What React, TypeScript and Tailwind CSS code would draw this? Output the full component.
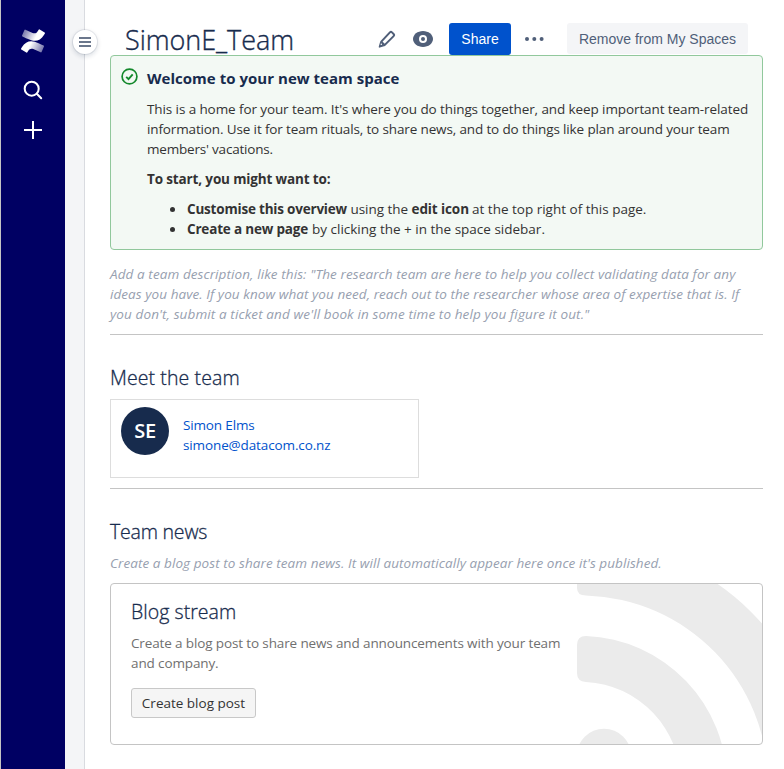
import type { ReactNode } from "react";

function Line({ className = "", children }: { className?: string; children: ReactNode }) {
  return <span className={"block whitespace-nowrap " + className}>{children}</span>;
}

function ConfluenceLogo() {
  return (
    <svg width="24" height="24" viewBox="0 0 24 24" fill="none">
      <defs>
        <linearGradient id="lower" x1="23" y1="22" x2="7" y2="14" gradientUnits="userSpaceOnUse">
          <stop offset="0" stopColor="#fff" stopOpacity="0.4" />
          <stop offset="0.85" stopColor="#fff" />
        </linearGradient>
        <linearGradient id="upper" x1="1" y1="2" x2="17" y2="10" gradientUnits="userSpaceOnUse">
          <stop offset="0" stopColor="#fff" stopOpacity="0.4" />
          <stop offset="0.85" stopColor="#fff" />
        </linearGradient>
      </defs>
      <path
        fill="url(#lower)"
        d="M.87 18.257c-.248.382-.53.875-.763 1.245a.764.764 0 0 0 .255 1.04l4.965 3.054a.764.764 0 0 0 1.058-.26c.199-.332.454-.763.733-1.221 1.967-3.247 3.945-2.853 7.508-1.146l4.957 2.337a.764.764 0 0 0 1.028-.382l2.364-5.346a.764.764 0 0 0-.382-1 599.851 599.851 0 0 1-4.965-2.361C10.911 10.97 5.224 11.185.87 18.257z"
      />
      <path
        fill="url(#upper)"
        d="M23.131 5.743c.249-.405.531-.875.764-1.25a.764.764 0 0 0-.256-1.034L18.675.404a.764.764 0 0 0-1.058.26c-.195.335-.451.763-.734 1.225-1.966 3.246-3.945 2.85-7.508 1.146L4.437.694a.764.764 0 0 0-1.027.382L1.046 6.422a.764.764 0 0 0 .382 1c1.039.49 3.105 1.467 4.965 2.361 6.698 3.246 12.392 3.029 16.738-4.04z"
      />
    </svg>
  );
}

function Sidebar() {
  return (
    <nav className="flex w-[65px] shrink-0 flex-col items-center border-l border-[#c4c4c4] bg-[#000063] pt-[29px]">
      <ConfluenceLogo />
      <svg className="mt-[27px]" width="20" height="20" viewBox="0 0 20 20" fill="none" stroke="#fff" strokeWidth="2">
        <circle cx="8.7" cy="8.7" r="7" />
        <path d="M13.8 13.8l4.4 4.4" strokeLinecap="round" />
      </svg>
      <svg className="mt-[21px]" width="18" height="18" viewBox="0 0 18 18" fill="#fff">
        <rect x="8" y="0" width="2" height="18" />
        <rect x="0" y="8" width="18" height="2" />
      </svg>
    </nav>
  );
}

function Header() {
  return (
    <header className="flex h-[55px] items-start pl-[15px] pt-[23px]">
      <h1 className="-mt-px w-[252px] whitespace-nowrap text-[27px] font-light leading-9 tracking-[-0.05px] text-[#172b4d] [-webkit-text-stroke:0.35px_#172b4d]">
        SimonE_Team
      </h1>
      <svg className="mt-[7px] shrink-0" width="20" height="19" viewBox="0 0 20 19" fill="none">
        <path d="M4.300 11.6L12.9 2.4a1.5 1.5 0 0 1 2.1 0l1.6 1.6a1.5 1.5 0 0 1 0 2.1L7.6 15.1z" stroke="#505f79" strokeWidth="2" strokeLinejoin="round" />
        <path d="M3.2 11.6l4.6 4.4-4.9 1.6c-.9.3-1.4-.2-1.1-1.1z" fill="#505f79" />
        <circle cx="4.300" cy="14.200" r="0.8" fill="#fff" />
      </svg>
      <svg className="ml-4 mt-2 shrink-0" width="20" height="16" viewBox="0 0 20 16">
        <path d="M10 0C4.6 0 0 3.6 0 8s4.6 8 10 8 10-3.6 10-8-4.600-8-10-8z" fill="#505f79" />
        <circle cx="10" cy="8" r="4" fill="#fff" />
        <circle cx="10" cy="8" r="2" fill="#505f79" />
      </svg>
      <button className="ml-4 h-8 w-[62px] shrink-0 rounded-[3px] bg-[#0052cc] font-['Liberation_Sans',sans-serif] text-sm text-white">
        Share
      </button>
      <svg className="ml-3.5 mt-3.5 shrink-0" width="19" height="4" viewBox="0 0 19 4" fill="#505f79">
        <circle cx="2" cy="2" r="2" />
        <circle cx="9.300" cy="2" r="2" />
        <circle cx="16.600" cy="2" r="2" />
      </svg>
      <button className="ml-[23px] h-[31px] w-[181px] shrink-0 whitespace-nowrap rounded-[3px] bg-[#f4f5f7] pt-px font-['Liberation_Sans',sans-serif] text-sm text-[#505f79]">
        Remove from My Spaces
      </button>
    </header>
  );
}

function WelcomePanel() {
  return (
    <section className="flex h-[195px] rounded border border-[#91c89c] bg-[#f3f9f4] pl-2.5">
      <svg className="mt-3 shrink-0" width="17" height="17" viewBox="0 0 17 17" fill="none" stroke="#14892c">
        <circle cx="8.500" cy="8.500" r="7.400" strokeWidth="1.7" />
        <path d="M5.200 8.900l2.300 2.200 4.200-4.700" strokeWidth="1.9" />
      </svg>
      <div className="pl-[9px] pt-[13px] leading-5">
        <h2 className="h-5 whitespace-nowrap text-[15px] font-bold leading-[18px] tracking-[0.03px] text-[#172b4d]">
          Welcome to your new team space
        </h2>
        <p className="mt-2.5">
          <Line className="tracking-[-0.098px]">
            This is a home for your team. It's where you do things together, and keep important team-related
          </Line>
          <Line className="tracking-[-0.135px]">
            information. Use it for team rituals, to share news, and to do things like plan around your team
          </Line>
          <Line className="tracking-[-0.2px]">members' vacations.</Line>
        </p>
        <p className="mt-2.5 whitespace-nowrap font-bold tracking-[-0.14px]">To start, you might want to:</p>
        <ul className="mt-2.5">
          <li className="flex items-center whitespace-nowrap">
            <i className="ml-[23px] mr-3 size-[5px] rounded-full bg-[#333]" />
            <b className="w-[163.500px] tracking-[-0.2px]">Customise this overview</b>
            <span className="w-[61px] tracking-[-0.05px]">using the</span>
            <b className="w-[60.500px] tracking-[-0.1px]">edit icon</b>
            <span>at the top right of this page.</span>
          </li>
          <li className="flex items-center whitespace-nowrap">
            <i className="ml-[23px] mr-3 size-[5px] rounded-full bg-[#333]" />
            <b className="w-[125px] tracking-[-0.18px]">Create a new page</b>
            <span>by clicking the + in the space sidebar.</span>
          </li>
        </ul>
      </div>
    </section>
  );
}

function TeamSection() {
  return (
    <section className="h-[154px] border-b border-[#c4c4c4]">
      <h2 className="pt-[29px] text-[19.500px] font-light leading-7 tracking-[0.1px] text-[#172b4d] [-webkit-text-stroke:0.3px_#172b4d]">
        Meet the team
      </h2>
      <div className="mt-[7px] flex h-[79px] w-[309px] border border-[#ddd] pl-2.5 pt-[7px]">
        <div className="flex size-12 items-center justify-center rounded-full bg-[#172b4d] text-xl font-semibold tracking-[-0.3px] text-white">
          SE
        </div>
        <div className="ml-3.5 mt-2 leading-5 text-[#0052cc]">
          <Line className="tracking-[-0.15px]">Simon Elms</Line>
          <Line className="tracking-[-0.12px]">simone@datacom.co.nz</Line>
        </div>
      </div>
    </section>
  );
}

function BlogCard() {
  return (
    <div className="mt-2.5 flex h-[162px] justify-between overflow-hidden rounded border border-[#c4c4c4] bg-white">
      <div className="pl-5 pt-3.5">
        <h3 className="text-[19.500px] font-light leading-7 tracking-[0.05px] text-[#172b4d] [-webkit-text-stroke:0.3px_#172b4d]">
          Blog stream
        </h3>
        <p className="mt-[7px] leading-5 text-[#707070]">
          <Line className="tracking-[-0.13px]">Create a blog post to share news and announcements with your team</Line>
          <Line className="tracking-[-0.12px]">and company.</Line>
        </p>
        <button className="mt-[15px] block h-[30px] w-[125px] whitespace-nowrap rounded-[3px] border border-[#c8c8c8] bg-[#f5f5f5] text-[#333]">
          Create blog post
        </button>
      </div>
      <svg className="shrink-0" width="185" height="160" viewBox="577 584 185 160" fill="#ebebeb">
        <path d="M577 541H580A242 242 0 0 1 822 783H768A187.500 187.500 0 0 0 586 595.500Q577 595.500 577 588z" />
        <path d="M577 645Q577 636 586 636A146.500 147 0 0 1 727 783H681A100 101 0 0 0 586 682Q577 681.500 577 673z" />
        <circle cx="604" cy="756" r="27.300" />
      </svg>
    </div>
  );
}

export default function App() {
  return (
    <div className="flex h-[769px] w-[784px] overflow-hidden bg-white font-['Open_Sans','Noto_Sans',sans-serif] text-[13.500px] text-[#333]">
      <Sidebar />
      <div className="relative w-5 shrink-0 border-r border-[#d9dbe0] bg-[#f4f5f7]">
        <button className="absolute left-2 top-[30px] flex size-6 flex-col items-center justify-center gap-0.5 rounded-full bg-white shadow-[0_0_0_1px_rgba(9,30,66,0.08),0_2px_4px_1px_rgba(9,30,66,0.12)]">
          <i className="h-0.5 w-3 bg-[#6b778c]" />
          <i className="h-0.5 w-3 bg-[#6b778c]" />
          <i className="h-0.5 w-3 bg-[#6b778c]" />
        </button>
      </div>
      <main className="ml-[25px] w-[653px]">
        <Header />
        <WelcomePanel />
        <p className="h-[85px] border-b border-[#c4c4c4] pt-3.5 italic leading-5 text-[#97a0af]">
          <Line className="tracking-[0.09px]">
            Add a team description, like this: "The research team are here to help you collect validating data for any
          </Line>
          <Line className="tracking-[0.065px]">
            ideas you have. If you know what you need, reach out to the researcher whose area of expertise that is. If
          </Line>
          <Line className="tracking-[0.11px]">
            you don't, submit a ticket and we'll book in some time to help you figure it out."
          </Line>
        </p>
        <TeamSection />
        <section>
          <h2 className="pt-[29px] text-[19.500px] font-light leading-7 tracking-[-0.200px] text-[#172b4d] [-webkit-text-stroke:0.3px_#172b4d]">
            Team news
          </h2>
          <p className="mt-[7px] whitespace-nowrap italic leading-5 tracking-[0.07px] text-[#97a0af]">
            Create a blog post to share team news. It will automatically appear here once it's published.
          </p>
          <BlogCard />
        </section>
      </main>
    </div>
  );
}
